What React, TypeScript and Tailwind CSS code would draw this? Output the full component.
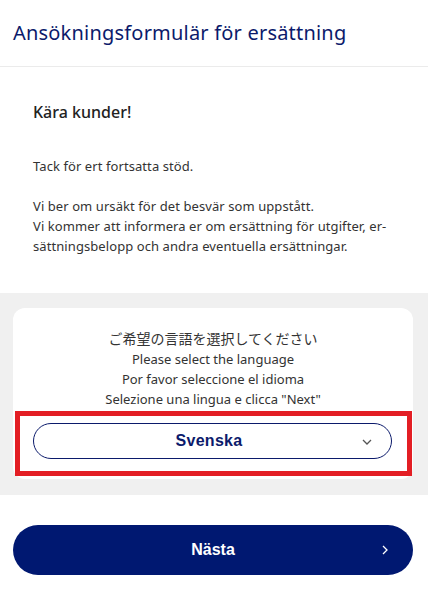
import React from "react";

const body = { fontFamily: '"Noto Sans", "Noto Sans CJK JP", sans-serif' };

function Chevron({ className }: { className: string }) {
  return (
    <svg viewBox="0 0 10 6" className={className} fill="none" stroke="currentColor" strokeWidth="1.3">
      <path d="M1 1l4 4 4-4" />
    </svg>
  );
}

export default function App() {
  return (
    <div className="w-[428px] h-[609px] bg-white text-[#333]" style={body}>
      {/* Header */}
      <div className="h-[67px] flex items-center px-[13px] border-b border-[#ebebeb]">
        <h1 className="text-[20px] leading-none text-[#0b1a6b] tracking-[0.2px]">Ansökningsformulär för ersättning</h1>
      </div>

      {/* Message */}
      <div className="pt-[33px] pb-[37px] px-[33px]">
        <h2 className="text-[16px] leading-[24px] font-medium text-[#222]">Kära kunder!</h2>
        <div className="mt-[32px] text-[13px] leading-[20px] tracking-[0.08px]">
          <p>Tack för ert fortsatta stöd.</p>
          <p className="mt-[20px]">Vi ber om ursäkt för det besvär som uppstått.</p>
          <p>
            Vi kommer att informera er om ersättning för utgifter, er-
            <br />
            sättningsbelopp och andra eventuella ersättningar.
          </p>
        </div>
      </div>

      {/* Language selection */}
      <div className="bg-[#f0f0f0] pt-[15px] pb-[16px] pl-[13px] pr-[15px]">
        <div className="bg-white rounded-[12px] pt-[21px] pb-[3px]">
          <div className="text-center text-[13px] leading-[20px] text-[#333]">
            <p className="text-[14px]">ご希望の言語を選択してください</p>
            <p>Please select the language</p>
            <p>Por favor seleccione el idioma</p>
            <p>Selezione una lingua e clicca "Next"</p>
          </div>
          <div className="mt-[2px] ml-[2px] mr-[1px] border-[5px] border-[#e31e24] pt-[7px] pb-[12px] pl-[13px] pr-[15px]">
            <div className="relative h-[36px] rounded-full border border-[#0b1a6b] flex items-center justify-center">
              <span
                className="text-[16px] font-bold text-[#0b1a6b] -ml-[7px] tracking-[0.3px]"
                style={{ fontFamily: '"Liberation Sans", Arial, sans-serif' }}
              >
                Svenska
              </span>
              <Chevron className="absolute right-[19px] top-[15px] w-[10px] h-[6px] text-[#555]" />
            </div>
          </div>
        </div>
      </div>

      {/* Next button */}
      <div className="pt-[30px] px-[13px] pr-[15px]">
        <button
          className="relative w-full h-[50px] rounded-full bg-[#001871] text-white text-[16px] font-bold flex items-center justify-center"
          style={{ fontFamily: '"Liberation Sans", Arial, sans-serif' }}
        >
          Nästa
          <svg viewBox="0 0 6 10" className="absolute right-[25px] top-[20px] w-[6px] h-[10px]" fill="none" stroke="currentColor" strokeWidth="1.3">
            <path d="M1 1l4 4-4 4" />
          </svg>
        </button>
      </div>
    </div>
  );
}
